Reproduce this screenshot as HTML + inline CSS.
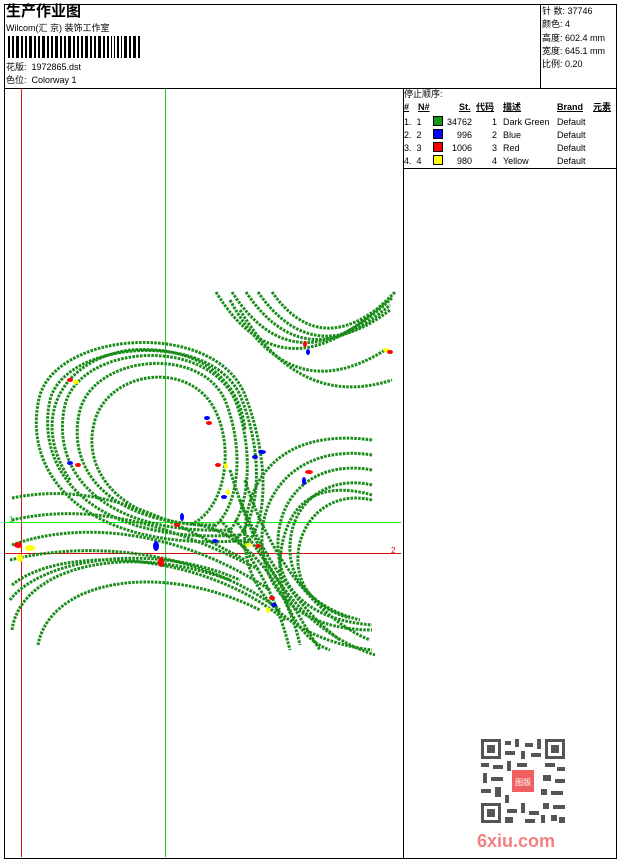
<!DOCTYPE html>
<html><head><meta charset="utf-8"><style>
*{margin:0;padding:0;box-sizing:border-box}
body{width:620px;height:860px;background:#fff;position:relative;overflow:hidden;font-family:"Liberation Sans","Noto Sans CJK SC",sans-serif;font-size:9px;color:#000}
.a{position:absolute;white-space:nowrap;line-height:11px}
.b{position:absolute;background:#000}
.sw{position:absolute;width:10px;height:10px;border:1px solid #000}
u{text-decoration:underline}
</style></head><body>
<div class="b" style="left:4px;top:4px;width:613px;height:1px"></div>
<div class="b" style="left:4px;top:858px;width:613px;height:1px"></div>
<div class="b" style="left:4px;top:4px;width:1px;height:855px"></div>
<div class="b" style="left:616px;top:4px;width:1px;height:855px"></div>
<div class="b" style="left:4px;top:88px;width:613px;height:1px"></div>
<div class="b" style="left:540px;top:4px;width:1px;height:84px"></div>
<div class="b" style="left:403px;top:88px;width:1px;height:771px"></div>
<div class="b" style="left:403px;top:168px;width:214px;height:1px"></div>

<div class="a" style="left:6px;top:3px;font-size:15px;line-height:17px;font-weight:bold">生产作业图</div>
<div class="a" style="left:6px;top:23px">Wilcom(汇 京) 装饰工作室</div>
<svg class="a" style="left:8px;top:36px" width="134" height="22">
<g fill="#000">
<rect x="0" width="2" height="22"/><rect x="4" width="2" height="22"/><rect x="8" width="3" height="22"/><rect x="13" width="2" height="22"/><rect x="17" width="2" height="22"/><rect x="21" width="3" height="22"/><rect x="26" width="2" height="22"/><rect x="30" width="2" height="22"/><rect x="34" width="3" height="22"/><rect x="39" width="2" height="22"/><rect x="43" width="2" height="22"/><rect x="47" width="3" height="22"/><rect x="52" width="2" height="22"/><rect x="56" width="2" height="22"/><rect x="60" width="3" height="22"/><rect x="65" width="2" height="22"/><rect x="69" width="2" height="22"/><rect x="73" width="2" height="22"/><rect x="77" width="3" height="22"/><rect x="82" width="2" height="22"/><rect x="86" width="2" height="22"/><rect x="90" width="3" height="22"/><rect x="95" width="2" height="22"/><rect x="99" width="2" height="22"/><rect x="103" width="1" height="22"/><rect x="106" width="1" height="22"/><rect x="109" width="2" height="22"/><rect x="113" width="1" height="22"/><rect x="116" width="3" height="22"/><rect x="121" width="2" height="22"/><rect x="125" width="3" height="22"/><rect x="130" width="2" height="22"/>
</g></svg>
<div class="a" style="left:6px;top:62px">花版:&nbsp; 1972865.dst</div>
<div class="a" style="left:6px;top:75px">色位:&nbsp; Colorway 1</div>

<div class="a" style="left:542px;top:5px;line-height:13.3px">针 数: 37746<br>颜色: 4<br>高度: 602.4 mm<br>宽度: 645.1 mm<br>比例: 0.20</div>

<div class="a" style="left:404px;top:89px">停止顺序:</div>
<div class="a" style="left:404px;top:102px;font-weight:bold"><u>#</u></div>
<div class="a" style="left:418px;top:102px;font-weight:bold"><u>N#</u></div>
<div class="a" style="left:459px;top:102px;font-weight:bold"><u>St.</u></div>
<div class="a" style="left:476px;top:102px;font-weight:bold"><u>代码</u></div>
<div class="a" style="left:503px;top:102px;font-weight:bold"><u>描述</u></div>
<div class="a" style="left:557px;top:102px;font-weight:bold"><u>Brand</u></div>
<div class="a" style="left:593px;top:102px;font-weight:bold"><u>元素</u></div>

<div class="a" style="left:404px;top:116px;line-height:13px">1.&nbsp; 1<br>2.&nbsp; 2<br>3.&nbsp; 3<br>4.&nbsp; 4</div>
<div class="sw" style="left:433px;top:116px;background:#119911"></div>
<div class="sw" style="left:433px;top:129px;background:#0000ff"></div>
<div class="sw" style="left:433px;top:142px;background:#ff0000"></div>
<div class="sw" style="left:433px;top:155px;background:#ffff00"></div>
<div class="a" style="left:440px;top:116px;width:32px;text-align:right;line-height:13px">34762<br>996<br>1006<br>980</div>
<div class="a" style="left:480px;top:116px;width:17px;text-align:right;line-height:13px">1<br>2<br>3<br>4</div>
<div class="a" style="left:503px;top:116px;line-height:13px">Dark Green<br>Blue<br>Red<br>Yellow</div>
<div class="a" style="left:557px;top:116px;line-height:13px">Default<br>Default<br>Default<br>Default</div>

<svg class="a" style="left:0;top:0" width="404" height="860">
<line x1="21.5" y1="89" x2="21.5" y2="857" stroke="#e01010" stroke-width="1"/>
<line x1="165.5" y1="89" x2="165.5" y2="857" stroke="#22cc22" stroke-width="1"/>
<line x1="4" y1="522.5" x2="401" y2="522.5" stroke="#11ee11" stroke-width="1"/>
<line x1="4" y1="553.5" x2="401" y2="553.5" stroke="#d01010" stroke-width="1"/>
<text x="9" y="522" fill="#11cc11" font-size="8">1</text>
<text x="391" y="553" fill="#d01010" font-size="8">2</text>
<g fill="none" stroke="#1a8c1a" stroke-width="3" stroke-dasharray="2.6 1.2">
<path d="M216 292 Q285 405 395 292"/>
<path d="M232 292 Q295 390 392 298"/>
<path d="M246 292 Q305 380 390 305"/>
<path d="M258 292 Q312 370 390 310"/>
<path d="M272 292 Q320 360 388 300"/>
<path d="M240 310 Q300 410 392 380"/>
<path d="M230 300 Q290 410 385 350"/>
<path d="M200 525 C120 520 80 470 95 420 C110 370 190 360 215 410 C235 450 225 510 190 525"/>
<path d="M215 525 C110 525 65 470 80 410 C95 355 200 345 225 400 C245 450 240 510 210 530"/>
<path d="M230 530 C100 535 50 470 65 405 C80 345 205 335 235 400 C255 450 250 515 225 535"/>
<path d="M240 535 C90 545 35 470 50 400 C65 340 210 330 240 395 C265 455 260 520 235 540"/>
<path d="M250 540 C80 555 20 470 40 395 C60 330 215 320 245 395 C270 460 268 525 245 545"/>
<path d="M70 480 C30 420 60 360 130 350 C200 345 240 380 245 430"/>
<path d="M200 525 C260 540 290 600 300 645"/>
<path d="M220 520 C260 560 280 610 290 650"/>
<path d="M235 520 C275 570 300 620 320 650"/>
<path d="M240 500 C265 560 300 610 340 640"/>
<path d="M245 480 C270 560 320 620 370 640"/>
<path d="M230 470 C260 570 300 630 375 655"/>
<path d="M12 498 C100 480 170 520 245 560"/>
<path d="M12 520 C100 500 180 530 260 570"/>
<path d="M12 545 C80 520 180 530 270 590"/>
<path d="M10 560 C90 540 200 550 280 610"/>
<path d="M12 585 C60 545 200 550 285 620"/>
<path d="M12 630 C20 570 120 540 230 580"/>
<path d="M38 645 C50 580 160 560 260 610"/>
<path d="M10 600 C40 560 150 540 240 580"/>
<path d="M372 440 C300 430 250 460 245 530 C240 590 290 640 372 650"/>
<path d="M372 455 C310 445 265 480 262 535 C260 590 300 630 372 630"/>
<path d="M372 470 C320 460 280 490 278 540 C276 590 310 620 372 625"/>
<path d="M372 485 C330 475 292 500 290 545 C288 585 320 610 360 620"/>
<path d="M372 500 C330 490 300 520 298 555 C296 590 320 610 350 618"/>
<path d="M372 495 C320 480 285 500 280 560 C278 600 300 640 330 650"/>
</g>
<g>
<ellipse cx="70" cy="380" rx="3" ry="2" fill="#f00"/><ellipse cx="76" cy="382" rx="3" ry="2" fill="#ff0"/>
<ellipse cx="207" cy="418" rx="3" ry="2" fill="#00f"/><ellipse cx="209" cy="423" rx="3" ry="2" fill="#f00"/>
<ellipse cx="70" cy="463" rx="3" ry="2" fill="#00f"/><ellipse cx="78" cy="465" rx="3" ry="2" fill="#f00"/>
<ellipse cx="218" cy="465" rx="3" ry="2" fill="#f00"/><ellipse cx="226" cy="466" rx="2" ry="3" fill="#ff0"/>
<ellipse cx="262" cy="452" rx="4" ry="2" fill="#00f"/><ellipse cx="255" cy="457" rx="3" ry="2" fill="#00f"/>
<ellipse cx="309" cy="472" rx="4" ry="2" fill="#f00"/><ellipse cx="304" cy="481" rx="2" ry="4" fill="#00f"/>
<ellipse cx="228" cy="492" rx="2" ry="3" fill="#ff0"/><ellipse cx="224" cy="497" rx="3" ry="2" fill="#00f"/>
<ellipse cx="182" cy="517" rx="2" ry="4" fill="#00f"/><ellipse cx="177" cy="525" rx="3" ry="2" fill="#f00"/>
<ellipse cx="18" cy="545" rx="4" ry="3" fill="#f00"/><ellipse cx="30" cy="548" rx="5" ry="3" fill="#ff0"/><ellipse cx="20" cy="558" rx="3" ry="4" fill="#ff0"/>
<ellipse cx="156" cy="546" rx="3" ry="5" fill="#00f"/><ellipse cx="161" cy="562" rx="3" ry="5" fill="#f00"/>
<ellipse cx="215" cy="541" rx="3" ry="2" fill="#00f"/>
<ellipse cx="248" cy="545" rx="3" ry="2" fill="#ff0"/><ellipse cx="258" cy="546" rx="3" ry="2" fill="#f00"/>
<ellipse cx="272" cy="598" rx="3" ry="2" fill="#f00"/><ellipse cx="274" cy="605" rx="3" ry="2" fill="#00f"/><ellipse cx="268" cy="610" rx="2" ry="3" fill="#ff0"/>
<ellipse cx="305" cy="344" rx="2" ry="3" fill="#f00"/><ellipse cx="308" cy="352" rx="2" ry="3" fill="#00f"/>
<ellipse cx="386" cy="350" rx="3" ry="2" fill="#ff0"/><ellipse cx="390" cy="352" rx="3" ry="2" fill="#f00"/>
</g>
</svg>

<svg class="a" style="left:481px;top:739px" width="84" height="84">
<rect width="84" height="84" fill="#fff"/>
<g fill="#555">
<rect x="0" y="0" width="20" height="20"/><rect x="64" y="0" width="20" height="20"/><rect x="0" y="64" width="20" height="20"/>
</g>
<g fill="#fff"><rect x="3" y="3" width="14" height="14"/><rect x="67" y="3" width="14" height="14"/><rect x="3" y="67" width="14" height="14"/></g>
<g fill="#555"><rect x="6" y="6" width="8" height="8"/><rect x="70" y="6" width="8" height="8"/><rect x="6" y="70" width="8" height="8"/>
<path d="M24 2h6v4h-6zM34 0h4v8h-4zM44 4h8v4h-8zM56 0h4v10h-4zM24 12h10v4h-10zM40 12h4v8h-4zM50 14h10v4h-10zM0 24h8v4h-8zM12 26h10v4h-10zM26 22h4v10h-4zM36 24h10v4h-10zM64 24h10v4h-10zM76 28h8v4h-8zM2 34h4v10h-4zM10 38h12v4h-12zM62 36h8v6h-8zM74 40h10v4h-10zM0 50h10v4h-10zM14 48h6v10h-6zM24 56h4v8h-4zM60 50h6v6h-6zM70 52h12v4h-12zM26 70h10v4h-10zM40 64h4v10h-4zM48 72h10v4h-10zM62 64h6v6h-6zM72 66h12v4h-12zM24 78h8v6h-8zM44 80h10v4h-10zM60 76h4v8h-4zM70 76h6v6h-6zM78 78h6v6h-6z"/></g>
<rect x="31" y="31" width="22" height="22" fill="#f06060"/>
<text x="42" y="46" font-size="8" fill="#fff" text-anchor="middle">图版</text>
</svg>
<div class="a" style="left:477px;top:831px;font-size:18px;line-height:20px;font-weight:bold;color:#f08080">6xiu.com</div>
</body></html>
